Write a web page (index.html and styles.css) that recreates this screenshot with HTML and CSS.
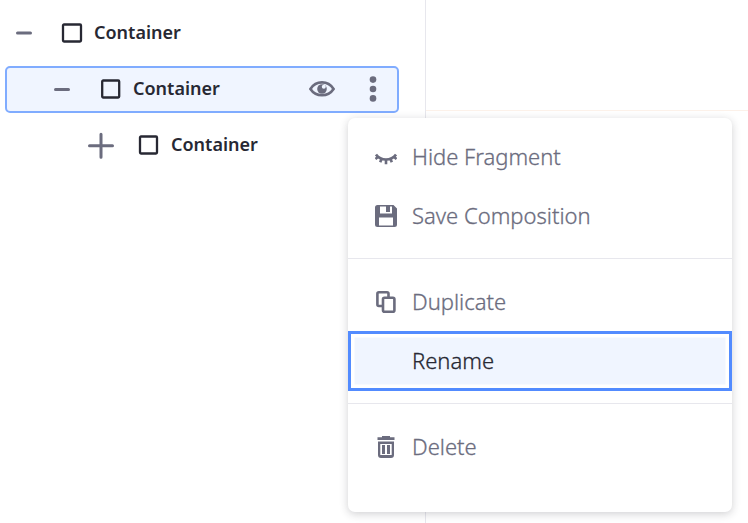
FILE: index.html
```html
<!DOCTYPE html>
<html lang="en">
<head>
<meta charset="utf-8">
<title>Page structure</title>
<link rel="stylesheet" href="styles.css">
</head>
<body>
<div class="editor">
  <aside class="tree">
    <div class="row level-1">
      <svg class="toggle" viewBox="0 0 28 28"><path d="M7.5 14h13"/></svg>
      <svg class="box" viewBox="0 0 20 20"><rect x="1" y="1.5" width="18" height="17" rx="1"/></svg>
      <span class="name">Container</span>
    </div>
    <div class="row level-2 selected">
      <svg class="toggle" viewBox="0 0 28 28"><path d="M7.5 14.5h13"/></svg>
      <svg class="box" viewBox="0 0 20 20"><rect x="1.2" y="1.5" width="17" height="17" rx="1"/></svg>
      <span class="name">Container</span>
      <svg class="eye" viewBox="0 0 26 18"><path class="lid" d="M1.4 9C7 .2 19 .2 24.6 9C19 17.4 7 17.4 1.4 9Z"/><circle cx="13" cy="9" r="4.8"/><circle class="glint" cx="14.8" cy="6.8" r="2"/></svg>
      <svg class="dots" viewBox="0 0 8 28"><circle cx="4" cy="4.6" r="3.3"/><circle cx="4" cy="14" r="3.3"/><circle cx="4" cy="23.4" r="3.3"/></svg>
    </div>
    <div class="row level-3">
      <svg class="toggle" viewBox="0 0 28 28"><path d="M2.5 14.8h23M14 3.3v23"/></svg>
      <svg class="box" viewBox="0 0 20 20"><rect x="1" y="1.5" width="17" height="17" rx="1"/></svg>
      <span class="name">Container</span>
    </div>
  </aside>
  <main class="canvas"><div class="section"></div></main>
</div>
<div class="menu">
  <div class="item"><svg class="icon" viewBox="0 0 22 22"><g class="line"><path d="M1 8.6C6 15.2 16 15.2 21 8.6"/><path d="M.5 13l3-2.4M5.2 16.2l1.5-3.7M11 18.2V13.5M16.8 16.2l-1.5-3.7M21.5 13L18.5 10.6"/></g></svg><span class="label">Hide Fragment</span></div>
  <div class="item"><svg class="icon" viewBox="0 0 22 22"><path fill-rule="evenodd" d="M2.5 0H18.5L22 3.5V19.5Q22 22 19.5 22H2.5Q0 22 0 19.5V2.5Q0 0 2.5 0ZM5 1.5V8.5H17V1.5H15V7H11V1.5ZM4 12.5V20.5H18V12.5Z"/></svg><span class="label">Save Composition</span></div>
  <div class="divider"></div>
  <div class="item"><svg class="icon" viewBox="0 0 22 22"><g class="line"><path d="M7 15H3.9Q2.4 15 2.4 13.5V2.8Q2.4 1.3 3.9 1.3H12Q13.5 1.3 13.5 2.8V6"/><rect x="8" y="6.7" width="11.4" height="14" rx="1.5"/></g></svg><span class="label">Duplicate</span></div>
  <div class="item focused"><span class="icon"></span><span class="label">Rename</span></div>
  <div class="divider"></div>
  <div class="item"><svg class="icon" viewBox="0 0 22 22"><path fill-rule="evenodd" d="M7 0H15V1.2H19.5V4H2.5V1.2H7ZM3 5.5H19V19Q19 22 16 22H6Q3 22 3 19ZM5.3 8V19H16.7V8ZM7 9H10V18H7ZM12 9H15V18H12Z"/></svg><span class="label">Delete</span></div>
</div>
</body>
</html>
```
FILE: styles.css
```css
* { box-sizing: border-box; }

body {
  margin: 0;
  overflow: hidden;
  background: #fff;
  color: #272833;
  font-family: "Noto Sans", "Open Sans", sans-serif;
}

svg { flex: none; fill: #6b6c7e; }

.editor { display: flex; height: 523px; }

.tree {
  display: flex;
  flex-direction: column;
  gap: 9px;
  width: 426px;
  padding: 10px 26px 0 5px;
  border-right: 1px solid #e7e7ed;
}

.row {
  display: flex;
  align-items: center;
  height: 47px;
  padding-bottom: 1px;
  border: 2px solid transparent;
  border-radius: 5px;
}

.selected { background: #f0f5ff; border-color: #80acff; }
.level-1 { padding-left: 3px; }
.level-2 { padding-left: 41px; }
.level-3 { padding-left: 80px; }

.toggle {
  width: 28px;
  height: 28px;
  margin-right: 24px;
  fill: none;
  stroke: #6b6c7e;
  stroke-width: 3;
  stroke-linecap: round;
}

.level-2 .toggle { margin-right: 25px; }

.box {
  width: 20px;
  height: 20px;
  margin-right: 12px;
  fill: none;
  stroke: #272833;
  stroke-width: 2.3;
  overflow: visible;
}

.name {
  width: 87px;
  padding-bottom: 2px;
  font-size: 18px;
  font-weight: 600;
  line-height: 24px;
  white-space: nowrap;
}

.eye { width: 26px; height: 18px; margin-left: 89px; }
.lid { fill: none; stroke: #6b6c7e; stroke-width: 2.6; }
.glint { fill: #f0f5ff; }
.dots { width: 8px; height: 28px; margin-left: 34px; }

.canvas { flex: 1; }
.section { height: 111px; border-bottom: 1px solid #fcf1e9; }

.menu {
  position: absolute;
  left: 348px;
  top: 118px;
  width: 384px;
  height: 394px;
  padding-top: 10px;
  background: #fff;
  border-radius: 7px;
  box-shadow: 0 2px 9px rgba(39, 40, 51, .22);
}

.item {
  display: flex;
  align-items: center;
  gap: 15px;
  height: 59px;
  padding: 0 0 2px 27px;
  color: #6b6c7e;
  font-size: 22px;
  font-weight: 300;
  line-height: 30px;
  white-space: nowrap;
}

.label {
  padding-bottom: 2px;
  -webkit-text-stroke: .3px currentColor;
}

.icon { width: 22px; height: 22px; }
.line { fill: none; stroke: #6b6c7e; stroke-width: 2.6; }

.divider ~ .item { padding-bottom: 0; }

.focused {
  height: 60px;
  background: #f0f5ff;
  color: #272833;
  box-shadow: inset 0 0 0 3px #528bff, inset 0 0 0 6.5px #fff;
}

.divider { height: 1px; margin: 12px 0 13px; background: #e7e7ed; }
```
